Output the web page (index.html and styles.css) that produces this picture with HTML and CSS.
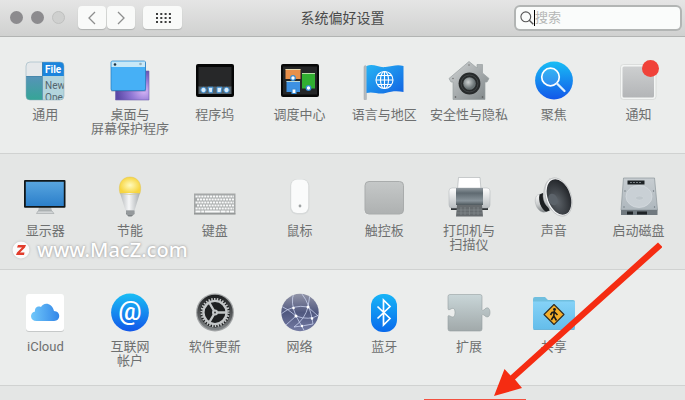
FILE: index.html
```html
<!DOCTYPE html>
<html lang="zh-CN">
<head>
<meta charset="utf-8">
<title>系统偏好设置</title>
<link rel="stylesheet" href="styles.css">
</head>
<body>
<header class="titlebar">
  <div class="tools">
    <div class="lights"><span class="light"></span><span class="light"></span><span class="light light-off"></span></div>
    <div class="nav">
      <button class="tool" type="button" aria-label="后退"><svg width="12" height="16" viewBox="0 0 12 16"><path d="M9 2 3 8l6 6" fill="none" stroke="#8d8e8e" stroke-width="1.3"/></svg></button>
      <button class="tool" type="button" aria-label="前进"><svg width="12" height="16" viewBox="0 0 12 16"><path d="M3 2l6 6-6 6" fill="none" stroke="#8d8e8e" stroke-width="1.3"/></svg></button>
    </div>
    <button class="tool tool-wide" type="button" aria-label="显示全部"><svg width="16" height="12" viewBox="0 0 16 12"><path d="M1 2h15M1 6h15M1 10h15" stroke="#3c3d3d" stroke-width="2" stroke-dasharray="2 2.3"/></svg></button>
  </div>
  <h1 class="title">系统偏好设置</h1>
  <label class="search">
    <svg width="14" height="14" viewBox="0 0 14 14"><circle cx="5.8" cy="5.8" r="4.9" fill="none" stroke="#555" stroke-width="1.1"/><path d="M9.3 9.3l4 4" stroke="#555" stroke-width="1.3"/></svg>
    <span class="caret"></span>
    <input class="search-input" type="text" placeholder="搜索" aria-label="搜索">
  </label>
</header>

<main class="panes">
  <section class="row">
    <button class="pane" type="button">
      <svg class="icon" viewBox="0 0 48 48">
        <defs><clipPath id="gc"><rect x="5" y="5" width="38" height="38" rx="4"/></clipPath><linearGradient id="gg" x1="0" y1="0" x2="0" y2="1"><stop offset="0" stop-color="#5793b9"/><stop offset="1" stop-color="#35a596"/></linearGradient></defs>
        <g clip-path="url(#gc)"><path fill="#e5e8ea" d="M5 5h16v14H5z"/><path fill="url(#gg)" d="M5 19h16v24H5z"/><path fill="#1b85dd" d="M21 5h22v14H21z"/><path fill="#b3d5dd" d="M21 19h22v24H21z"/><path d="M21.5 5v38M5 19.5h16" stroke="#4182a5" stroke-width=".7"/>
        <text class="glyph-bold" x="24" y="16" fill="#fff">File</text><text class="glyph-text" x="24" y="32" fill="#53656d">New</text><text class="glyph-text" x="24" y="44" fill="#53656d">Ope</text></g>
        <rect x="5" y="5" width="38" height="38" rx="4" fill="none" stroke="#87a9b9" stroke-width=".5"/>
      </svg><span>通用</span></button>
    <button class="pane" type="button">
      <svg class="icon" viewBox="0 0 48 48">
        <defs><radialGradient id="dp" cx=".85" cy=".7" r=".8"><stop offset="0" stop-color="#d4b3f5"/><stop offset=".5" stop-color="#9077d4"/><stop offset="1" stop-color="#5c4aa8"/></radialGradient></defs>
        <path fill="url(#dp)" stroke="#7163b0" stroke-width=".6" d="M9.500 14H43v29H9.500z"/><rect x="5" y="5" width="35" height="29.500" rx="1" fill="#4e5b8d" opacity=".5"/><rect x="5" y="4" width="34.500" height="29.500" rx="1.500" fill="#46b0f6" stroke="#237cbf" stroke-width=".7"/><path fill="#c8e8f7" d="M5.500 4.500h33.500v5.500H5.500z"/><circle cx="9" cy="7.500" r="1.300" fill="#1d3444"/><circle cx="34.500" cy="7" r="1.300" fill="#93aeba"/>
      </svg><span>桌面与<br>屏幕保护程序</span></button>
    <button class="pane" type="button">
      <svg class="icon" viewBox="0 0 48 48">
        <rect x="5" y="7" width="38" height="33" rx="2" fill="#050606"/><path fill="#272829" d="M7.500 10h33v20h-33z"/><path fill="#53616a" d="M7.500 29.500h33v7.500h-33z"/><g fill="#d8ecfa" stroke="#388bd0" stroke-width="1"><circle cx="12.500" cy="33" r="2.700"/><path d="M17 30.200h5l-.7 5.500h-3.200zM26 30.200h5l-1 5.500h-4z"/><circle cx="35.500" cy="33" r="2.700"/></g>
      </svg><span>程序坞</span></button>
    <button class="pane" type="button">
      <svg class="icon" viewBox="0 0 48 48">
        <rect x="5" y="7" width="38" height="33" rx="2" fill="#080909"/><path fill="#242627" d="M7 9.500h34v28H7z"/><path fill="#e8904b" d="M9.500 12h15v10h-15z"/><path fill="#3d91e2" d="M10.500 24h13.500v11H10.500z"/><path fill="#31af31" d="M26 16h13v15.500H26z"/><path d="M9.500 12.500h15M10.500 24.500h13.500M26 16.500h13" stroke="#e3efcf" stroke-opacity=".75"/><g fill="#fff" stroke="#368cd6" stroke-width="1.200"><circle cx="17" cy="21" r="2.300"/><circle cx="32.500" cy="31" r="2.300"/><path d="M16 32h4v4.500h-4z"/></g>
      </svg><span>调度中心</span></button>
    <button class="pane" type="button">
      <svg class="icon" viewBox="0 0 48 48">
        <defs><linearGradient id="fl" x1="0" y1="0" x2="1" y2="1"><stop offset="0" stop-color="#26b4f4"/><stop offset="1" stop-color="#1264e3"/></linearGradient></defs>
        <path fill="#b7bdc1" stroke="#8e9599" stroke-width=".4" d="M4 9.500q1.200-2 2.400 0v33H4z"/><path fill="url(#fl)" d="M6.500 9c7-3 12 2 19 1s12-3 18-1v26c-6-1-11-1-18 1s-12-2-19 0z"/><g fill="none" stroke="#fff" stroke-width="1.100"><circle cx="24.500" cy="23" r="8.500"/><ellipse cx="24.500" cy="23" rx="4" ry="8.500"/><path d="M24.500 14.500v17M16 23h17M17.500 18.500h14M17.500 27.500h14"/></g>
      </svg><span>语言与地区</span></button>
    <button class="pane" type="button">
      <svg class="icon" viewBox="0 0 48 48">
        <defs><linearGradient id="ho" x1="0" y1="0" x2="1" y2="1"><stop offset="0" stop-color="#d1d4d5"/><stop offset="1" stop-color="#7f8688"/></linearGradient><radialGradient id="le" cx=".4" cy=".4"><stop offset="0" stop-color="#ccd0d1"/><stop offset="1" stop-color="#697274"/></radialGradient></defs>
        <path fill="url(#ho)" stroke="#9aa0a2" stroke-width=".7" d="M24 4.500 32 11V7.500h5.500V16l6.500 5.500-2 3.500h-2v17.500H8V25H6l-2-3.500z"/><circle cx="24" cy="8" r=".8" fill="#777"/><circle cx="8" cy="21.500" r=".8" fill="#777"/><circle cx="10.500" cy="40" r=".8" fill="#555"/><circle cx="37.500" cy="40" r=".8" fill="#555"/><circle cx="24.500" cy="26.500" r="10.900" fill="#272a2b"/><circle cx="24.500" cy="26.500" r="8.500" fill="none" stroke="#4b5051" stroke-width=".7"/><circle cx="24.500" cy="26.500" r="6.300" fill="url(#le)"/>
      </svg><span>安全性与隐私</span></button>
    <button class="pane" type="button">
      <svg class="icon" viewBox="0 0 48 48">
        <defs><linearGradient id="bl" x1="0" y1="0" x2="0" y2="1"><stop offset="0" stop-color="#19bdf5"/><stop offset="1" stop-color="#1257e9"/></linearGradient></defs>
        <circle cx="24" cy="23.500" r="18.900" fill="url(#bl)"/><circle cx="20.500" cy="20" r="8.800" fill="#fff" fill-opacity=".12" stroke="#fff" stroke-width="1.700"/><path d="M27 26.500l7.500 7.500" stroke="#dcefff" stroke-width="2.300" stroke-linecap="round"/>
      </svg><span>聚焦</span></button>
    <button class="pane" type="button">
      <svg class="icon" viewBox="0 0 48 48">
        <defs><linearGradient id="gr" x1="0" y1="0" x2="0" y2="1"><stop offset="0" stop-color="#cdcfd0"/><stop offset="1" stop-color="#b3b5b7"/></linearGradient></defs>
        <rect x="5.500" y="7.500" width="35.500" height="35" rx="3" fill="#f3f5f4" stroke="#cdd0cf" stroke-width=".6"/><rect x="7.500" y="9.500" width="31.500" height="31" rx="1.500" fill="url(#gr)"/><circle cx="35.500" cy="11.500" r="8.500" fill="#f04239"/>
      </svg><span>通知</span></button>
  </section>

  <section class="row row-shade">
    <button class="pane" type="button">
      <svg class="icon" viewBox="0 0 48 48">
        <defs><linearGradient id="sc" x1="0" y1="0" x2="0" y2="1"><stop offset="0" stop-color="#58a5df"/><stop offset="1" stop-color="#2b7fca"/></linearGradient></defs>
        <path fill="#b5b9bb" d="M18 34h12l1 4H17z"/><path fill="#d3d6d7" stroke="#92989a" stroke-width=".5" d="M17 38h14l2 2.500H15.500z"/><rect x="3" y="7" width="41.500" height="27.800" rx="1" fill="#111719"/><path fill="url(#sc)" d="M4.800 8.700h38v24.200h-38z"/>
      </svg><span>显示器</span></button>
    <button class="pane" type="button">
      <svg class="icon" viewBox="0 0 48 48">
        <defs><radialGradient id="bu"><stop offset="0" stop-color="#fffbbf"/><stop offset="1" stop-color="#f7d53f"/></radialGradient><linearGradient id="bb"><stop offset="0" stop-color="#b4b8ba"/><stop offset=".45" stop-color="#f6f7f8"/><stop offset="1" stop-color="#a8adb0"/></linearGradient></defs>
        <path fill="url(#bu)" stroke="#dfc45b" stroke-width=".5" d="M14 20.500C11.500 11 16 4 24 4s12.500 7 10 16.500z"/><path fill="url(#bb)" d="M14 20h20l-5.500 17.500h-9z"/><path d="M14 20.500q10 2 20 0" fill="none" stroke="#d0c37e" stroke-width=".6"/><path fill="#7b8083" d="M20 37.500h8.500V41l-3 2.500h-3L20 41z"/><path d="M20 39h8.500M20.500 41h7.500" stroke="#c6cacc" stroke-width=".7"/>
      </svg><span>节能</span></button>
    <button class="pane" type="button">
      <svg class="icon" viewBox="0 0 48 48">
        <path fill="#a5a8a8" d="M3 20.500h41.500V41H3z"/><path d="M4.500 23.500H43M6 26.500h37M4.500 29.500H43M6 32.500h37M4.500 35.500H43" stroke="#f8f9f9" stroke-width="2.200" stroke-dasharray="2.200 .7"/><path d="M4.500 38.500H43" stroke="#f8f9f9" stroke-width="1.800" stroke-dasharray="5 .7 3 .7 15 .7"/><path d="M3 41h41.500" stroke="#858989"/>
      </svg><span>键盘</span></button>
    <button class="pane" type="button">
      <svg class="icon" viewBox="0 0 48 48">
        <rect x="14" y="6" width="19.500" height="35.500" rx="7" fill="#d7dada"/><rect x="15.200" y="6.500" width="17" height="33.500" rx="6" fill="#fafbfb"/><circle cx="24" cy="33" r="1.400" fill="#9fa3a4"/>
      </svg><span>鼠标</span></button>
    <button class="pane" type="button">
      <svg class="icon" viewBox="0 0 48 48"><defs><linearGradient id="tp" x1="0" y1="0" x2="0" y2="1"><stop offset="0" stop-color="#c5c8c8"/><stop offset="1" stop-color="#aeb1b1"/></linearGradient></defs><rect x="5" y="8.500" width="38.500" height="32.500" rx="4" fill="url(#tp)" stroke="#a9acac"/></svg><span>触控板</span></button>
    <button class="pane" type="button">
      <svg class="icon" viewBox="0 0 48 48">
        <defs><linearGradient id="pr" x1="0" y1="0" x2="0" y2="1"><stop offset="0" stop-color="#90999f"/><stop offset=".3" stop-color="#5f6a71"/><stop offset=".75" stop-color="#89949b"/><stop offset="1" stop-color="#4d575c"/></linearGradient><linearGradient id="pw" x1="0" y1="0" x2="0" y2="1"><stop offset="0" stop-color="#fff"/><stop offset="1" stop-color="#b8bdc0"/></linearGradient></defs>
        <path fill="#fff" stroke="#a9aeb0" stroke-width=".6" d="M13.500 4.500h21.500l1 12H12.500z"/><path fill="#303538" d="M6 32h37v5H6z"/><rect x="4" y="15" width="41" height="20" rx="3" fill="url(#pw)" stroke="#aeb3b5" stroke-width=".5"/><path fill="url(#pr)" d="M11 15h27v17H11z"/><path fill="#666b6e" d="M12 32h25l1 11.500H11z"/><path d="M16 34v8M20 34v8M24.500 34v8M29 34v8M33 34v8M12 37h25M11.500 40h26" stroke="#888e91" stroke-width=".6"/>
      </svg><span>打印机与<br>扫描仪</span></button>
    <button class="pane" type="button">
      <svg class="icon" viewBox="0 0 48 48">
        <defs><linearGradient id="sp" x1="0" y1="0" x2="0" y2="1"><stop offset="0" stop-color="#fff"/><stop offset=".6" stop-color="#c9cccd"/><stop offset="1" stop-color="#7d8284"/></linearGradient><radialGradient id="co" cx=".35" cy=".6" r=".7"><stop offset="0" stop-color="#5e646a"/><stop offset="1" stop-color="#1f2226"/></radialGradient></defs>
        <path fill="url(#sp)" stroke="#9da1a3" stroke-width=".4" d="M9 21.500c-4 1-4.500 6-3 10.500s5 8 9 7l5-1.500-7-17z"/><path fill="#1b1e20" d="m9.500 21.500 3.500-1.500 6.500 17.500-3.500 1.300c-5-3-8-11-6.500-17.300z"/><path fill="url(#sp)" stroke="#a1a5a7" stroke-width=".4" d="M20 5.500C14.500 10 14 17 13 23c.5 6 3 10 6.500 12.500 5 1.500 9 5 15 7z"/><ellipse cx="28.500" cy="24" rx="12.500" ry="19.800" transform="rotate(-20 28.500 24)" fill="#f4f5f6" stroke="#a1a5a7" stroke-width=".5"/><ellipse cx="29" cy="24" rx="11.300" ry="18.300" transform="rotate(-20 29 24)" fill="url(#co)"/><ellipse cx="23" cy="26.500" rx="4.500" ry="6" transform="rotate(-20 23 26.500)" fill="#5c636a"/>
      </svg><span>声音</span></button>
    <button class="pane" type="button">
      <svg class="icon" viewBox="0 0 48 48">
        <defs><linearGradient id="hd" x1="0" y1="0" x2="0" y2="1"><stop offset="0" stop-color="#c7cdd1"/><stop offset="1" stop-color="#aeb7bd"/></linearGradient></defs>
        <path fill="url(#hd)" stroke="#8d969b" stroke-width=".7" d="M8.500 5h31l3 32H6z"/><path fill="#70797f" d="M6 37h36.500v5H6z"/><path fill="#1d2225" d="M12.500 7.500h17v4h-17zM12 38.500h6v3h-6zM22 38.500h10v3H22z"/><path d="M15 9.500h11" stroke="#747c80" stroke-dasharray="2 1"/><ellipse cx="24" cy="23.500" rx="13" ry="11" fill="#c9d0d5" stroke="#d7dde1" stroke-width=".7"/><ellipse cx="24.500" cy="25" rx="4" ry="2" fill="#bec6cb" stroke="#d7dde1" stroke-width=".4"/><circle cx="10" cy="18" r=".7" fill="#69757b"/><circle cx="38.500" cy="18" r=".7" fill="#69757b"/><circle cx="9" cy="34" r=".7" fill="#69757b"/><circle cx="39.500" cy="34" r=".7" fill="#69757b"/>
      </svg><span>启动磁盘</span></button>
  </section>

  <section class="row">
    <button class="pane" type="button">
      <svg class="icon" viewBox="0 0 48 48">
        <defs><linearGradient id="cl"><stop offset="0" stop-color="#71c8fa"/><stop offset="1" stop-color="#3286e8"/></linearGradient></defs>
        <rect x="5" y="6" width="38" height="37" rx="3" fill="#c6c9c9"/><rect x="5" y="5" width="38" height="37" rx="3" fill="#fff"/><path fill="url(#cl)" d="M15.500 32C9 32 8 24 14 22.500c-.5-4 3-6 6-4.500 2-5 11-5 13 4 7 0 7 10 0 10z"/>
      </svg><span>iCloud</span></button>
    <button class="pane" type="button">
      <svg class="icon" viewBox="0 0 48 48"><circle cx="24" cy="23.500" r="18.900" fill="url(#bl)"/><text class="glyph-at" x="24" y="31" text-anchor="middle" fill="#fff">@</text></svg><span>互联网<br>帐户</span></button>
    <button class="pane" type="button">
      <svg class="icon" viewBox="0 0 48 48">
        <defs><linearGradient id="ge" x1="0" y1="0" x2="0" y2="1"><stop offset="0" stop-color="#1c1e1f"/><stop offset="1" stop-color="#84888a"/></linearGradient></defs>
        <circle cx="24" cy="23.500" r="19" fill="#a3a6a7"/><circle cx="24" cy="23.500" r="17.800" fill="url(#ge)"/><circle cx="24" cy="23.500" r="15" fill="#1e2021"/><circle cx="24" cy="23.500" r="13.500" fill="none" stroke="#c4c7c8" stroke-width="2.200" stroke-dasharray="1.500 1.327"/><circle cx="24" cy="23.500" r="11.600" fill="none" stroke="#c4c7c8" stroke-width="2.400"/><path d="M24 23.500h11M24 23.500 18.500 14M24 23.500 18.500 33" stroke="#c4c7c8" stroke-width="2.400"/><circle cx="24" cy="23.500" r="3" fill="#c4c7c8"/><circle cx="24" cy="23.500" r="1" fill="#3a3c3d"/>
      </svg><span>软件更新</span></button>
    <button class="pane" type="button">
      <svg class="icon" viewBox="0 0 48 48">
        <defs><linearGradient id="ne" x1="0" y1="0" x2="0" y2="1"><stop offset="0" stop-color="#9295a8"/><stop offset=".5" stop-color="#50587f"/><stop offset="1" stop-color="#747ba3"/></linearGradient><clipPath id="nc"><circle cx="24" cy="23.500" r="18.500"/></clipPath></defs>
        <circle cx="24" cy="23.500" r="18.700" fill="url(#ne)"/><g clip-path="url(#nc)" fill="none" stroke="#dce5ff" stroke-width=".8" stroke-opacity=".85"><path d="M5 25q12-10 27-7l10 9M18 4q-4 9 2 23l9 16M32 18q-3 12-14 20M20 27q13 5 23-1M5 17q7 3 15 10M32 18l2-13M26 5q8 10 11 30M20 27 10 36M37 35q-10 2-19 3"/></g><g fill="#fff"><circle cx="32" cy="18" r="1.500"/><circle cx="20" cy="27" r="1.500"/><circle cx="17.500" cy="19" r="1.300"/><circle cx="36" cy="29.500" r="1.300"/><circle cx="26" cy="37" r="1.200"/></g>
      </svg><span>网络</span></button>
    <button class="pane" type="button">
      <svg class="icon" viewBox="0 0 48 48"><defs><linearGradient id="bt" x1="0" y1="0" x2="0" y2="1"><stop offset="0" stop-color="#17b4f7"/><stop offset="1" stop-color="#096aec"/></linearGradient></defs><rect x="11" y="5" width="26" height="38" rx="12" fill="url(#bt)"/><path d="m17.500 17.500 12.500 12-6.500 6.500V11l6.500 6.500-12.500 12" fill="none" stroke="#fff" stroke-width="1.700"/></svg><span>蓝牙</span></button>
    <button class="pane" type="button">
      <svg class="icon" viewBox="0 0 48 48"><defs><linearGradient id="ex" x1="0" y1="0" x2="0" y2="1"><stop offset="0" stop-color="#c9d6d8"/><stop offset="1" stop-color="#a1a9aa"/></linearGradient></defs><path fill="url(#ex)" stroke="#96a0a1" stroke-width=".6" d="M5 5.500h30q2 0 2 2v13q0 1.500 2 .5c3-4 6-2 6 2.500s-3 6-6 2.500q-2-1-2 .5V40q0 2-2 2H5q-2 0-2-2V27.500q0-1.500 2-.5c3 2 5 1 5-3.500s-2-5-5-3q-2 1-2-1V7.500q0-2 2-2z"/></svg><span>扩展</span></button>
    <button class="pane" type="button">
      <svg class="icon" viewBox="0 0 48 48">
        <defs><linearGradient id="fo" x1="0" y1="0" x2="0" y2="1"><stop offset="0" stop-color="#85d2f7"/><stop offset="1" stop-color="#64bdea"/></linearGradient></defs>
        <path fill="#70bfdf" d="M3 10q0-2 2-2h10l3 3h25q2 0 2 2v4H3z"/><path fill="url(#fo)" d="M3 12.500h42V39q0 1.500-1.500 1.500h-39Q3 40.500 3 39z"/><path d="M3.500 40.500h41" stroke="#50a7d4" stroke-width=".7"/><path fill="#f4ae29" stroke="#302c22" stroke-width="1.100" stroke-linejoin="round" d="m24 15.500 10 10-10 10-10-10z"/><circle cx="24.500" cy="20.500" r="1.400" fill="#1b1b18"/><path fill="none" stroke="#1b1b18" stroke-width="1.600" d="m24.300 22-.5 5 2.700 4.500M23.800 27l-2.500 4M20.500 26l1.500-2.500 2.500-.5 3 3"/>
      </svg><span>共享</span></button>
  </section>

  <section class="row row-shade row-last"><span class="highlight"></span></section>
</main>

<div class="watermark">
  <svg width="18" height="18" viewBox="0 0 18 18"><circle cx="9" cy="9" r="8.500" fill="#fbfbfb"/><path fill="#e23d2c" d="M6 4h8l-1 2.500-5 5h4.500L12 14H4l1-2.500 5-5H5z"/></svg>
  <span>www.MacZ.com</span>
</div>
<svg class="arrow" width="172" height="156" viewBox="0 0 172 156"><path fill="#f52c12" d="M168 2.500 172.500 7 25 139.500 32 148 4 156 14.500 129 20.500 135.500z"/></svg>
</body>
</html>
```
FILE: styles.css
```css
* { box-sizing: border-box; }

body {
  margin: 0;
  min-height: 100vh;
  display: flex;
  flex-direction: column;
  position: relative;
  overflow: hidden;
  background: #ebedec;
  color: #6e7070;
  font-family: Roboto, "Noto Sans CJK SC", sans-serif;
  font-size: 13px;
}

button, input { font: inherit; color: inherit; }

.titlebar {
  display: grid;
  grid-template-columns: 1fr auto 1fr;
  align-items: center;
  height: 37px;
  padding: 0 5px 1px;
  background: linear-gradient(#e5e5e5, #d0d1d0);
  border-bottom: 1px solid #b2b4b3;
}

.tools, .lights, .nav { display: flex; align-items: center; }
.tools { gap: 8px; padding-left: 5px; }
.lights { gap: 8px; margin-right: 5px; }
.nav { gap: 1px; }

.light { width: 13px; height: 13px; border-radius: 50%; background: #8c8b8e; }
.light-off { background: #cfd0cf; border: 1px solid #bfc0bf; }

.tool {
  display: grid;
  place-items: center;
  width: 28px;
  height: 23px;
  padding: 0;
  border: 0;
  border-radius: 4px;
  background: #f9faf9;
  box-shadow: 0 1px 1px #b0b2b1;
}
.tool-wide { width: 39px; }

.title {
  margin: 0;
  color: #4a4b4b;
  font-size: 14px;
  font-weight: 400;
  line-height: 20px;
}

.search {
  justify-self: end;
  display: flex;
  align-items: center;
  width: 164px;
  height: 22px;
  padding-left: 4px;
  border-radius: 4px;
  background: #fafcfb;
  box-shadow: 0 0 0 2px #b2b5b4;
}
.search-input {
  flex: 1;
  min-width: 0;
  height: 21px;
  padding: 0;
  border: 0;
  outline: 0;
  background: none;
}
.search-input::placeholder { color: #b5b7b6; opacity: 1; }
.caret { width: 1px; height: 16px; background: #000; }

.panes { flex: 1; display: flex; flex-direction: column; padding-top: 1px; }

.row {
  display: grid;
  grid-template-columns: repeat(8, 1fr);
  min-height: 116px;
  padding: 19px 4px 0 3px;
  border-bottom: 1px solid #d0d2d1;
}
.row-shade { background: #e4e6e5; }
.row-last {
  display: flex;
  justify-content: center;
  align-items: flex-end;
  flex: 1;
  min-height: 0;
  padding: 0;
  border: 0;
}
.highlight { width: 102px; height: 1px; margin-left: 264px; background: #f4503f; }

.pane {
  display: flex;
  flex-direction: column;
  align-items: center;
  min-width: 0;
  padding: 0;
  border: 0;
  background: none;
  line-height: 14px;
  white-space: nowrap;
}
.pane span { padding-top: 3px; }
.icon { width: 48px; height: 48px; }

.glyph-bold { font: 700 10px "Roboto", sans-serif; }
.glyph-text { font: 400 10px "Roboto", sans-serif; }
.glyph-at { font: 500 26px "Roboto", sans-serif; }

.watermark {
  position: absolute;
  left: 12px;
  top: 236px;
  display: flex;
  align-items: center;
  gap: 7px;
  color: #fff;
  font: 500 20px/28px "Noto Sans", sans-serif;
  text-shadow: 0 0 2px #aaa, 0 0 3px #aaa;
}
.watermark svg { filter: drop-shadow(0 0 1px #bbb); }

.arrow { position: absolute; left: 490px; top: 240px; }
```
